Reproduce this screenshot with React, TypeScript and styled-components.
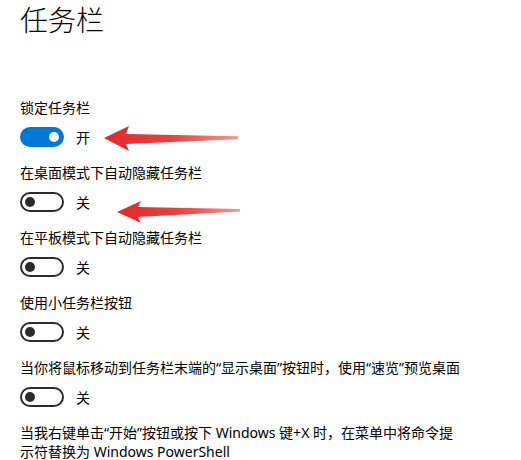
import React from "react";
import styled, { createGlobalStyle } from "styled-components";

const GlobalStyle = createGlobalStyle`
  html, body {
    margin: 0;
    padding: 0;
    background: #ffffff;
  }
  body {
    font-family: "Noto Sans", "Noto Sans CJK SC", sans-serif;
    color: #000000;
  }
`;

const Page = styled.div`
  position: relative;
  box-sizing: border-box;
  width: 521px;
  height: 460px;
  overflow: hidden;
  padding-left: 20px;
  background: #ffffff;
`;

const Title = styled.h1`
  margin: 0 0 60px;
  font-size: 28px;
  line-height: 38px;
  font-weight: 300;
  font-family: "Noto Sans CJK SC", sans-serif;
  color: #000;
`;

const List = styled.div`
  display: flex;
  flex-direction: column;
  gap: 16px;
`;

const Setting = styled.div`
  display: flex;
  flex-direction: column;
  gap: 9px;
`;

const Label = styled.div<{ $lh?: number }>`
  font-size: 14px;
  line-height: ${(p) => p.$lh ?? 20}px;
  color: #000;
`;

const ToggleRow = styled.div`
  display: flex;
  align-items: center;
  gap: 12px;
  height: 20px;
`;

const Track = styled.div<{ $on: boolean }>`
  box-sizing: border-box;
  width: 44px;
  height: 20px;
  border-radius: 10px;
  border: 2px solid ${(p) => (p.$on ? "#0078d7" : "#2b2b2b")};
  background: ${(p) => (p.$on ? "#0078d7" : "transparent")};
  display: flex;
  align-items: center;
  justify-content: ${(p) => (p.$on ? "flex-end" : "flex-start")};
  padding: 0 3px;
`;

const Knob = styled.span<{ $on: boolean }>`
  width: 10px;
  height: 10px;
  border-radius: 50%;
  background: ${(p) => (p.$on ? "#ffffff" : "#2b2b2b")};
`;

const State = styled.span`
  font-size: 14px;
  line-height: 20px;
  font-family: "Noto Sans CJK SC", sans-serif;
  color: #000;
`;

const Arrows = styled.svg`
  position: absolute;
  left: 0;
  top: 0;
  pointer-events: none;
`;

type Item = { label: string; on?: boolean };

const items: Item[] = [
  { label: "锁定任务栏", on: true },
  { label: "在桌面模式下自动隐藏任务栏" },
  { label: "在平板模式下自动隐藏任务栏" },
  { label: "使用小任务栏按钮" },
  { label: "当你将鼠标移动到任务栏末端的“显示桌面”按钮时，使用“速览”预览桌面" },
];

const Toggle = ({ on }: { on: boolean }) => (
  <ToggleRow>
    <Track $on={on}>
      <Knob $on={on} />
    </Track>
    <State>{on ? "开" : "关"}</State>
  </ToggleRow>
);

export default function App() {
  return (
    <>
      <GlobalStyle />
      <Page>
        <Title>任务栏</Title>
        <List>
          {items.map((it) => (
            <Setting key={it.label}>
              <Label>{it.label}</Label>
              <Toggle on={!!it.on} />
            </Setting>
          ))}
          <Setting>
            <Label $lh={19}>
              当我右键单击“开始”按钮或按下 Windows 键+X 时，在菜单中将命令提
              <br />
              示符替换为 Windows PowerShell
            </Label>
          </Setting>
        </List>
        <Arrows width="521" height="460" viewBox="0 0 521 460">
          <defs>
            <linearGradient id="arrowFade" x1="0" y1="0" x2="1" y2="0">
              <stop offset="0" stopColor="#e3282b" />
              <stop offset="0.5" stopColor="#e8403e" />
              <stop offset="1" stopColor="#f39a90" />
            </linearGradient>
          </defs>
          <polygon
            points="104,138 129,126 126,134 238,136.3 238,139.3 126,144 129,151"
            fill="url(#arrowFade)"
          />
          <polygon
            points="117,212 141,201 138,207 240,209 240,211.5 138,217 141,223"
            fill="url(#arrowFade)"
          />
        </Arrows>
      </Page>
    </>
  );
}
